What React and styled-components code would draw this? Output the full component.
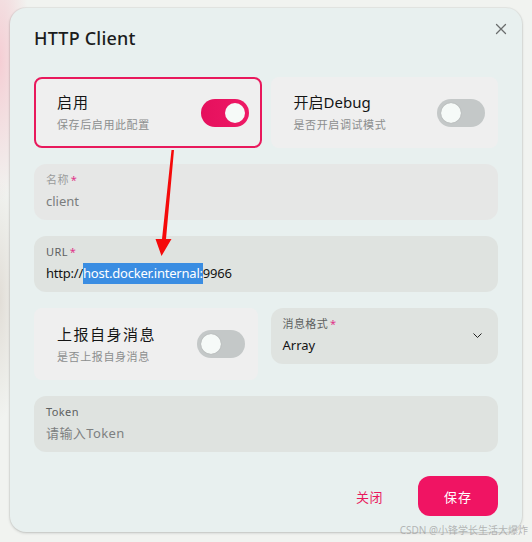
import React from "react";
import styled, { createGlobalStyle } from "styled-components";

const Global = createGlobalStyle`
  html, body { margin: 0; padding: 0; }
  body {
    width: 532px;
    height: 542px;
    overflow: hidden;
    background:
      radial-gradient(ellipse 30px 140px at 0px 60px, rgba(246, 190, 200, 0.7), rgba(246,190,200,0) 100%),
      radial-gradient(ellipse 20px 120px at 0px 300px, rgba(210, 200, 190, 0.5), rgba(210,200,190,0) 100%),
      #f1f3f0;
    font-family: "Noto Sans", "Noto Sans CJK SC", sans-serif;
  }
  * { box-sizing: border-box; }
`;

const Page = styled.div`
  position: relative;
  width: 532px;
  height: 542px;
  padding: 8px 10px 0 10px;
`;

const Dialog = styled.div`
  position: relative;
  width: 512px;
  height: 524px;
  background: #e8f0ef;
  border-radius: 16px;
  box-shadow: 0 1px 3px rgba(0, 0, 0, 0.18), 0 0 0 1px rgba(0,0,0,0.04);
  padding: 18px 24px 16px 24px;
  display: flex;
  flex-direction: column;
`;

const Header = styled.div`
  display: flex;
  justify-content: space-between;
  align-items: flex-start;
`;

const Title = styled.h2`
  margin: 0;
  font-size: 18px;
  line-height: 24px;
  font-weight: 500;
  color: #1b1c1c;
  letter-spacing: 0.2px;
`;

const CloseBtn = styled.button`
  width: 16px;
  height: 16px;
  margin: -5px -11px 0 0;
  padding: 0;
  border: none;
  background: transparent;
  display: flex;
  align-items: center;
  justify-content: center;
  color: #6a6d6d;
`;

const Form = styled.div`
  margin-top: 27px;
  display: flex;
  flex-direction: column;
  gap: 16px;
`;

const Row = styled.div`
  display: grid;
  grid-template-columns: 1fr 1fr;
  column-gap: 9px;
  align-items: start;
  height: ${(p) => p.$h}px;
`;

const SwitchCard = styled.div`
  height: ${(p) => p.$h}px;
  width: ${(p) => (p.$narrow ? "calc(100% - 4px)" : "100%")};
  background: #efefef;
  border-radius: 8px;
  border: 2px solid ${(p) => (p.$active ? "#e8195c" : "transparent")};
  padding: 0 11px 0 21px;
  display: flex;
  align-items: center;
  justify-content: space-between;
`;

const CardText = styled.div`
  display: flex;
  flex-direction: column;
  gap: 5px;
`;

const CardTitle = styled.div`
  font-size: 15px;
  line-height: 20px;
  color: #141515;
  letter-spacing: ${(p) => p.$ls || 0}px;
`;

const CardSub = styled.div`
  font-size: 11px;
  line-height: 16px;
  color: #8c8e8e;
  letter-spacing: 0.6px;
`;

const Track = styled.div`
  width: 48px;
  height: 28px;
  border-radius: 14px;
  background: ${(p) =>
    p.$on ? "linear-gradient(90deg, #e5105d, #ee1a66)" : "#c4c8c8"};
  display: flex;
  align-items: center;
  justify-content: ${(p) => (p.$on ? "flex-end" : "flex-start")};
  padding: 0 4px;
`;

const Knob = styled.div`
  width: 20px;
  height: 20px;
  border-radius: 50%;
  background: #f6faf8;
  box-shadow: ${(p) => (p.$on ? "none" : "0 0 1px rgba(0,0,0,0.3)")};
`;

const Field = styled.div`
  height: 56px;
  border-radius: 12px;
  background: ${(p) => (p.$disabled ? "#e6e7e6" : "#dfe3e0")};
  padding: 8px 12px 0 12px;
  display: flex;
  flex-direction: column;
  gap: 3px;
  position: relative;
`;

const Label = styled.div`
  font-size: 11px;
  line-height: 16px;
  color: ${(p) => (p.$disabled ? "#9a9c9c" : "#5e6161")};
  letter-spacing: 0.4px;
`;

const Star = styled.span`
  color: #e0358a;
  margin-left: 2px;
`;

const Value = styled.div`
  font-size: 13px;
  line-height: 20px;
  color: ${(p) => (p.$muted ? "#7b7d7d" : p.$placeholder ? "#7d8080" : "#121313")};
  letter-spacing: ${(p) => (p.$placeholder ? "0.4px" : p.$tight ? "-0.22px" : "0")};
`;

const Selected = styled.span`
  background: #3a8de2;
  color: #ffffff;
  padding: 1px 0 2px;
`;

const Chevron = styled.svg`
  position: absolute;
  right: 16px;
  top: 25px;
`;

const Footer = styled.div`
  margin-top: 24px;
  display: flex;
  justify-content: flex-end;
  align-items: center;
  gap: 19px;
`;

const TextBtn = styled.button`
  height: 40px;
  padding: 0 16px;
  border: none;
  background: transparent;
  color: #e8195c;
  font-family: inherit;
  font-size: 13px;
  letter-spacing: 0.5px;
`;

const PrimaryBtn = styled.button`
  width: 80px;
  height: 40px;
  border: none;
  border-radius: 12px;
  background: #f01463;
  color: #ffffff;
  font-family: inherit;
  font-size: 13px;
  letter-spacing: 1px;
`;

const Arrow = styled.svg`
  position: absolute;
  left: 0;
  top: 0;
  pointer-events: none;
`;

const Watermark = styled.div`
  position: absolute;
  right: 4px;
  bottom: 5px;
  font-size: 10px;
  line-height: 14px;
  color: rgba(160, 160, 160, 0.75);
  white-space: nowrap;
`;

function Switch({ on }) {
  return (
    <Track $on={on}>
      <Knob $on={on} />
    </Track>
  );
}

export default function App() {
  return (
    <>
      <Global />
      <Page>
        <Dialog>
          <Header>
            <Title>HTTP Client</Title>
            <CloseBtn aria-label="close">
              <svg width="12" height="12" viewBox="0 0 12 12">
                <path d="M1.5 1.5 L10.5 10.5 M10.5 1.5 L1.5 10.5" stroke="currentColor" strokeWidth="1.3" strokeLinecap="round" />
              </svg>
            </CloseBtn>
          </Header>
          <Form>
            <Row $h={71}>
              <SwitchCard $h={71} $active>
                <CardText>
                  <CardTitle $ls={1}>启用</CardTitle>
                  <CardSub>保存后启用此配置</CardSub>
                </CardText>
                <Switch on />
              </SwitchCard>
              <SwitchCard $h={71}>
                <CardText>
                  <CardTitle>开启Debug</CardTitle>
                  <CardSub>是否开启调试模式</CardSub>
                </CardText>
                <Switch />
              </SwitchCard>
            </Row>
            <Field $disabled>
              <Label $disabled>名称<Star>*</Star></Label>
              <Value $muted>client</Value>
            </Field>
            <Field>
              <Label>URL<Star>*</Star></Label>
              <Value $tight>
                http://<Selected>host.docker.internal:</Selected>9966
              </Value>
            </Field>
            <Row $h={72}>
              <SwitchCard $h={72} $narrow>
                <CardText>
                  <CardTitle $ls={1.5}>上报自身消息</CardTitle>
                  <CardSub>是否上报自身消息</CardSub>
                </CardText>
                <Switch />
              </SwitchCard>
              <Field>
                <Label>消息格式<Star>*</Star></Label>
                <Value>Array</Value>
                <Chevron width="9" height="5" viewBox="0 0 9 5">
                  <polyline points="0.5,0.5 4.5,4.5 8.5,0.5" fill="none" stroke="#222" strokeWidth="1" />
                </Chevron>
              </Field>
            </Row>
            <Field>
              <Label>Token</Label>
              <Value $placeholder>请输入Token</Value>
            </Field>
          </Form>
          <Footer>
            <TextBtn>关闭</TextBtn>
            <PrimaryBtn>保存</PrimaryBtn>
          </Footer>
        </Dialog>
        <Arrow width="532" height="542" viewBox="0 0 532 542">
          <polygon points="171.5,150 174,150 166,239 171.5,239 161.5,256 155.5,239 162,239" fill="#f50a0a" />
        </Arrow>
        <Watermark>CSDN @小锋学长生活大爆炸</Watermark>
      </Page>
    </>
  );
}
